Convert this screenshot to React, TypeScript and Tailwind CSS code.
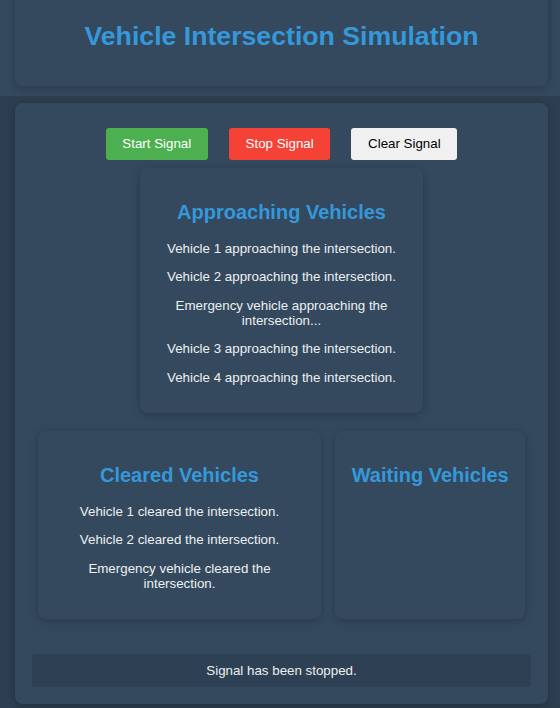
import React from 'react'

const approaching = [
  'Vehicle 1 approaching the intersection.',
  'Vehicle 2 approaching the intersection.',
  'Emergency vehicle approaching the intersection...',
  'Vehicle 3 approaching the intersection.',
  'Vehicle 4 approaching the intersection.',
]

const cleared = [
  'Vehicle 1 cleared the intersection.',
  'Vehicle 2 cleared the intersection.',
  'Emergency vehicle cleared the intersection.',
]

function Panel({ title, items, className }: { title: string; items: string[]; className: string }) {
  return (
    <div className={`rounded-[8px] bg-[#34495e] px-[16.67px] py-[16.67px] text-center shadow-[0_2px_10px_rgba(0,0,0,0.22)] ${className}`}>
      <h2 className="my-[16.6px] whitespace-nowrap text-[20px] leading-[23px] font-bold text-[#3498db]">{title}</h2>
      {items.length > 0 && (
        <div className="flex flex-col gap-[13.2px] pb-[11.5px]">
          {items.map((t) => (
            <p key={t} className="text-[13.33px] leading-[15.2px] text-[#ecf0f1]">
              {t}
            </p>
          ))}
        </div>
      )}
    </div>
  )
}

export default function App() {
  return (
    <div className="min-h-screen bg-[#2c3e50] font-['Liberation_Sans',Arial,sans-serif]">
      <header className="h-[96px] overflow-hidden bg-[#34495e]">
        <div className="-mt-[13px] ml-[15px] flex h-[99px] w-[533px] items-center justify-center rounded-[8px] bg-[#34495e] shadow-[0_2px_10px_rgba(0,0,0,0.22)]">
          <h1 className="text-[26.67px] leading-[31px] font-bold text-[#3498db]">Vehicle Intersection Simulation</h1>
        </div>
      </header>

      <main className="mt-[7px] ml-[15px] w-[533px] rounded-[8px] bg-[#34495e] p-[16.67px] shadow-[0_2px_10px_rgba(0,0,0,0.22)]">
        <div className="mt-[8.33px] flex justify-center gap-[21px]">
          <button className="h-[32px] rounded-[3px] bg-[#4caf50] px-[16.67px] text-[13.33px] text-white">Start Signal</button>
          <button className="h-[32px] rounded-[3px] bg-[#f44336] px-[16.67px] text-[13.33px] text-white">Stop Signal</button>
          <button className="h-[32px] rounded-[3px] bg-[#f0f0f0] px-[16.67px] text-[13.33px] text-black">Clear Signal</button>
        </div>

        <Panel title="Approaching Vehicles" items={approaching} className="mx-auto mt-[8px] w-[283px]" />

        <div className="mt-[18px] flex justify-center gap-[14px]">
          <Panel title="Cleared Vehicles" items={cleared} className="w-[283px]" />
          <Panel title="Waiting Vehicles" items={[]} className="w-[190px]" />
        </div>

        <div className="mt-[35px] flex h-[33px] items-center justify-center rounded-[4px] bg-[#2e4053] text-[13.33px] text-[#ecf0f1]">
          Signal has been stopped.
        </div>
      </main>
    </div>
  )
}
